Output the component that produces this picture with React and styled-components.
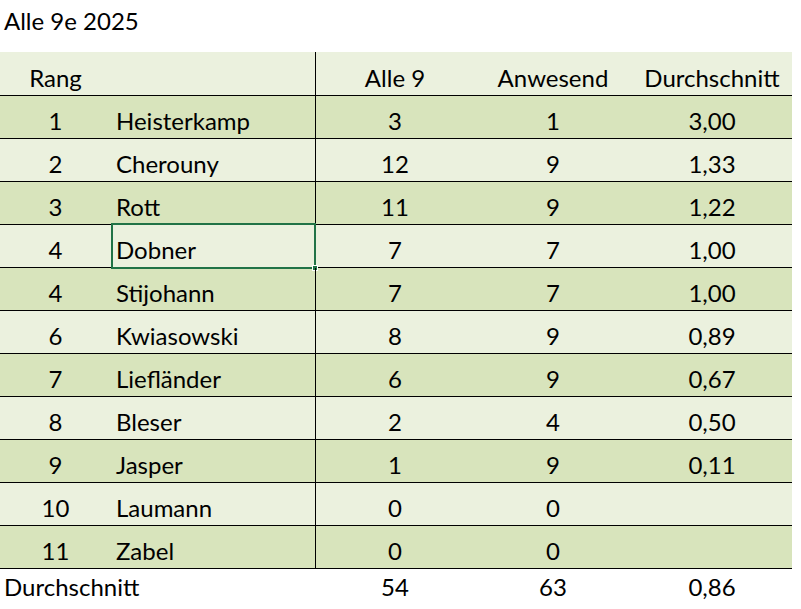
import React from "react";
import styled, { createGlobalStyle } from "styled-components";

const GlobalStyle = createGlobalStyle`
  html, body {
    margin: 0;
    padding: 0;
    background: #fff;
  }
  body {
    font-family: Lato, "Open Sans", "Liberation Sans", sans-serif;
    font-size: 24px;
    color: #000;
  }
`;

const rows = [
  { rank: 1, name: "Heisterkamp", all: 3, present: 1, avg: "3,00" },
  { rank: 2, name: "Cherouny", all: 12, present: 9, avg: "1,33" },
  { rank: 3, name: "Rott", all: 11, present: 9, avg: "1,22" },
  { rank: 4, name: "Dobner", all: 7, present: 7, avg: "1,00", selected: true },
  { rank: 4, name: "Stijohann", all: 7, present: 7, avg: "1,00" },
  { rank: 6, name: "Kwiasowski", all: 8, present: 9, avg: "0,89" },
  { rank: 7, name: "Liefländer", all: 6, present: 9, avg: "0,67" },
  { rank: 8, name: "Bleser", all: 2, present: 4, avg: "0,50" },
  { rank: 9, name: "Jasper", all: 1, present: 9, avg: "0,11" },
  { rank: 10, name: "Laumann", all: 0, present: 0, avg: "" },
  { rank: 11, name: "Zabel", all: 0, present: 0, avg: "" },
];

const Sheet = styled.div`
  width: 801px;
  height: 609px;
  overflow: hidden;
`;

const Title = styled.div`
  height: 52px;
  box-sizing: border-box;
  padding: 7px 0 0 4px;
  line-height: 1.2;
`;

const Table = styled.div`
  width: 792px;
`;

const Row = styled.div`
  display: grid;
  grid-template-columns: 111px 205px 158px 158px 160px;
  height: ${(p) => (p.$header ? 44 : 43)}px;
  box-sizing: border-box;
  border-bottom: 1px solid #000;
  background: ${(p) => (p.$dark ? "#d8e4bc" : "#ebf1de")};
  line-height: 1.2;
`;

const Cell = styled.div`
  position: relative;
  display: flex;
  align-items: flex-end;
  justify-content: ${(p) => (p.$left ? "flex-start" : "center")};
  padding: 0 0 2px ${(p) => (p.$left ? "5px" : "0")};
  white-space: nowrap;
  ${(p) => p.$divider && "border-right: 1px solid #000;"}
`;

const Selection = styled.div`
  position: absolute;
  top: -2px;
  left: 0;
  right: -1px;
  bottom: -2px;
  border: 2px solid #217346;
  pointer-events: none;

  &::after {
    content: "";
    position: absolute;
    right: -4px;
    bottom: -4px;
    width: 6px;
    height: 6px;
    background: #217346;
    border: 1px solid #fff;
    box-sizing: border-box;
  }
`;

const Footer = styled.div`
  display: grid;
  grid-template-columns: 316px 158px 158px 160px;
  width: 792px;
  height: 41px;
  box-sizing: border-box;
  padding-top: 4px;
  line-height: 1.2;
`;

const FooterCell = styled.div`
  text-align: ${(p) => (p.$left ? "left" : "center")};
  padding-left: ${(p) => (p.$left ? "4px" : "0")};
`;

export default function App() {
  return (
    <Sheet>
      <GlobalStyle />
      <Title>Alle 9e 2025</Title>
      <Table>
        <Row $header>
          <Cell>Rang</Cell>
          <Cell $divider />
          <Cell>Alle 9</Cell>
          <Cell>Anwesend</Cell>
          <Cell>Durchschnitt</Cell>
        </Row>
        {rows.map((r, i) => (
          <Row key={i} $dark={i % 2 === 0}>
            <Cell>{r.rank}</Cell>
            <Cell $left $divider>
              {r.name}
              {r.selected && <Selection />}
            </Cell>
            <Cell>{r.all}</Cell>
            <Cell>{r.present}</Cell>
            <Cell>{r.avg}</Cell>
          </Row>
        ))}
      </Table>
      <Footer>
        <FooterCell $left>Durchschnitt</FooterCell>
        <FooterCell>54</FooterCell>
        <FooterCell>63</FooterCell>
        <FooterCell>0,86</FooterCell>
      </Footer>
    </Sheet>
  );
}
